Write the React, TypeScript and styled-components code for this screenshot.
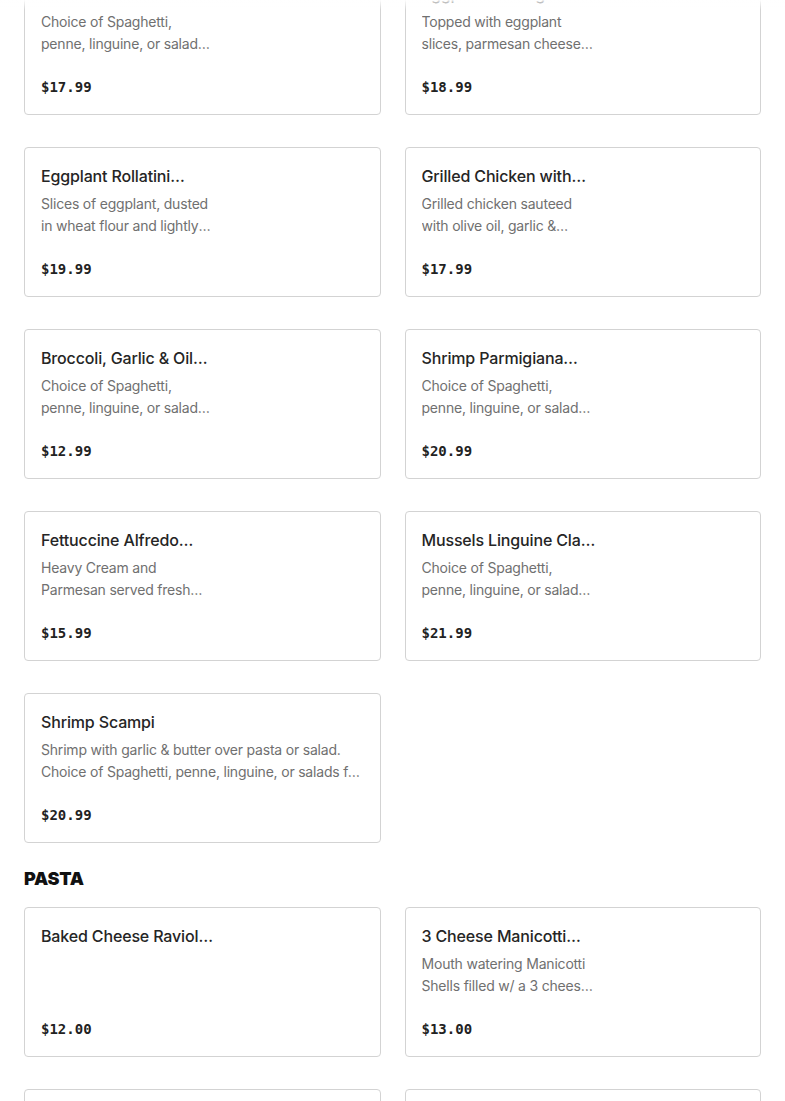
import styled, { createGlobalStyle } from "styled-components";

const GlobalStyle = createGlobalStyle`
    html, body {
        margin: 0;
        padding: 0;
        background: #ffffff;
        overflow: hidden;
    }
    body {
        font-family: Inter, "Noto Sans", sans-serif;
        color: #2d2d2d;
    }
`

const Page = styled.div`
    position: relative;
    padding: 0 24px;
    margin-top: -35px;
`

const TopFade = styled.div`
    position: fixed;
    top: 0;
    left: 0;
    right: 0;
    height: 10px;
    background: linear-gradient(to bottom, rgba(255, 255, 255, 0.95), rgba(255, 255, 255, 0));
    pointer-events: none;
`

const Section = styled.section`
    display: flex;
    flex-direction: column;
`

const SectionTitle = styled.h2`
    margin: 22px 0 14px;
    font-family: Inter, sans-serif;
    font-size: 18px;
    line-height: 28px;
    font-weight: 900;
    letter-spacing: -0.2px;
    color: #111111;
`

const Grid = styled.div`
    display: grid;
    grid-template-columns: repeat(2, 1fr);
    column-gap: 24px;
    row-gap: 32px;
`

const Card = styled.div`
    box-sizing: border-box;
    height: 150px;
    display: flex;
    flex-direction: column;
    padding: 16px;
    border: 1px solid #d3d3d3;
    border-radius: 4px;
    background: #fff;
`

const TextCol = styled.div<{ $narrow: boolean }>`
    display: flex;
    flex-direction: column;
    max-width: ${(p) => (p.$narrow ? "174px" : "100%")};
    flex: 1;
`

const Title = styled.h3`
    margin: 0 0 5px;
    font-size: 16px;
    line-height: 24px;
    font-weight: 500;
    letter-spacing: -0.15px;
    color: #252525;
    display: -webkit-box;
    -webkit-line-clamp: 1;
    -webkit-box-orient: vertical;
    overflow: hidden;
`

const Desc = styled.p`
    margin: 0;
    font-size: 14px;
    line-height: 22px;
    letter-spacing: -0.2px;
    color: #707070;
    display: -webkit-box;
    -webkit-line-clamp: 2;
    -webkit-box-orient: vertical;
    overflow: hidden;
`

const Price = styled.span`
    margin-top: auto;
    font-family: "DejaVu Sans Mono", "Liberation Mono", monospace;
    font-weight: 700;
    font-size: 14px;
    line-height: 22px;
    color: #222;
`

type Item = { name: string; desc?: string; price: string; image?: boolean }

const specials: Item[] = [
    { name: "Chicken Francese Entree", desc: "Choice of Spaghetti, penne, linguine, or salads for a side.", price: "$17.99", image: true },
    { name: "Eggplant Parmigiana Entree", desc: "Topped with eggplant slices, parmesan cheese, and mozzarella.", price: "$18.99", image: true },
    { name: "Eggplant Rollatini Entree", desc: "Slices of eggplant, dusted in wheat flour and lightly fried, stuffed with ricotta.", price: "$19.99", image: true },
    { name: "Grilled Chicken with Broccoli", desc: "Grilled chicken sauteed with olive oil, garlic & broccoli.", price: "$17.99", image: true },
    { name: "Broccoli, Garlic & Oil Pasta", desc: "Choice of Spaghetti, penne, linguine, or salads for a side.", price: "$12.99", image: true },
    { name: "Shrimp Parmigiana Entree", desc: "Choice of Spaghetti, penne, linguine, or salads for a side.", price: "$20.99", image: true },
    { name: "Fettuccine Alfredo Pasta", desc: "Heavy Cream and Parmesan served fresh over fettuccine.", price: "$15.99", image: true },
    { name: "Mussels Linguine Clam Sauce", desc: "Choice of Spaghetti, penne, linguine, or salads for a side.", price: "$21.99", image: true },
    { name: "Shrimp Scampi", desc: "Shrimp with garlic & butter over pasta or salad. Choice of Spaghetti, penne, linguine, or salads for a side.", price: "$20.99" },
]

const pasta: Item[] = [
    { name: "Baked Cheese Raviolli Pasta", price: "$12.00", image: true },
    { name: "3 Cheese Manicotti Pasta", desc: "Mouth watering Manicotti Shells filled w/ a 3 cheese blend.", price: "$13.00", image: true },
    { name: "Baked Ziti", desc: "Ziti with ricotta, mozzarella and marinara.", price: "$12.00", image: true },
    { name: "Lasagna", desc: "Layers of pasta, meat sauce and cheese.", price: "$14.00", image: true },
]

const MenuCard = ({ item }: { item: Item }) => (
    <Card>
        <TextCol $narrow={!!item.image}>
            <Title>{item.name}</Title>
            {item.desc && <Desc>{item.desc}</Desc>}
            <Price>{item.price}</Price>
        </TextCol>
    </Card>
)

const App = () => {
    return (
        <>
            <GlobalStyle />
            <Page>
                <Section>
                    <Grid>
                        {specials.map((item) => <MenuCard key={item.name} item={item} />)}
                    </Grid>
                </Section>
                <Section>
                    <SectionTitle>PASTA</SectionTitle>
                    <Grid>
                        {pasta.map((item) => <MenuCard key={item.name} item={item} />)}
                    </Grid>
                </Section>
            </Page>
            <TopFade />
        </>
    )
}

export default App;
